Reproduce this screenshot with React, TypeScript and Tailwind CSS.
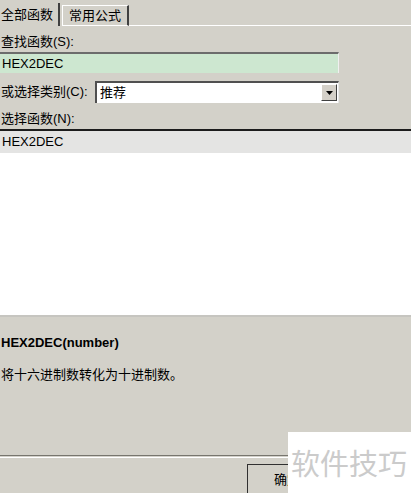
import { useState } from "react";

const ui = { fontFamily: '"Liberation Sans", "Noto Sans CJK SC", sans-serif' };

export default function App() {
    const [query, setQuery] = useState("HEX2DEC")
    const [tab, setTab] = useState(0)

    return (
        <div style={ui} className="relative w-[411px] h-[493px] overflow-hidden bg-[#d3d1c9] text-[13px] text-black">
            {/* tabs */}
            <div className="flex items-end h-[26px]">
                <div onClick={() => setTab(0)} className={`h-[23px] w-[60px] flex items-center pl-[1px] border-r-2 border-[#404040] ${tab === 0 ? "" : ""}`}>全部函数</div>
                <div onClick={() => setTab(1)} className="ml-[2px] h-[21px] w-[67px] flex items-center justify-center border-l border-t border-white border-r-2 border-r-[#404040] border-b border-b-white">常用公式</div>
                <div className="flex-1 h-px bg-white"></div>
            </div>

            <div className="pt-[8px] pl-[1px] leading-[15px]">查找函数(S):</div>
            <input
                value={query}
                onChange={(e) => setQuery(e.target.value)}
                style={ui}
                className="mt-[3px] block w-[339px] h-[21px] bg-[#cde7d0] border-t-2 border-[#6c6c6c] border-r border-r-[#f0f0f0] px-[2px] text-[13px] outline-none"
            />

            <div className="mt-[8px] flex items-center h-[22px]">
                <div className="w-[95px] pl-[1px]">或选择类别(C):</div>
                <div className="w-[244px] h-[22px] flex bg-white border-t-2 border-l-2 border-[#505050] border-r border-r-[#e8e8e8]">
                    <div className="flex-1 pl-[3px] leading-[19px]">推荐</div>
                    <div className="w-[16px] h-[17px] mt-[1px] mr-[1px] bg-[#d4d0c8] border border-t-white border-l-white border-r-[#404040] border-b-[#404040] flex items-center justify-center">
                        <svg width="7" height="4" viewBox="0 0 7 4"><path d="M0 0h7L3.5 4z" fill="#000" /></svg>
                    </div>
                </div>
            </div>

            <div className="mt-[8px] pl-[1px] leading-[16px]">选择函数(N):</div>

            <div className="mt-[2px] border-t-2 border-[#1c1c1c] border-b-2 border-b-[#c6c5c0] bg-white h-[188px]">
                <div className="h-[22px] bg-[#e4e4e3] flex items-center pl-[2px]">HEX2DEC</div>
            </div>

            <div className="pt-[18px] pl-[1px] font-bold leading-[16px]">HEX2DEC(number)</div>
            <div className="mt-[16px] pl-[1px] leading-[16px]">将十六进制数转化为十进制数。</div>

            <div className="mt-[72px] h-px bg-[#77756e]"></div>
            <div className="mt-[1px] h-px bg-white"></div>

            <div className="flex justify-end mt-[6px]">
                <div className="w-[164px] h-[30px] border-t border-l border-[#303030] flex items-center pl-[26px]">
                    <span className="w-[15px] overflow-hidden whitespace-nowrap">确定</span>
                </div>
            </div>

            {/* watermark */}
            <div className="absolute left-[288px] top-[432px] w-[123px] h-[61px] bg-white flex items-center pl-[3px]">
                <span style={{ fontFamily: '"Noto Sans CJK SC", sans-serif' }} className="text-[29px] text-[#cbcbcb] leading-none">软件技巧</span>
            </div>
        </div>
    );
}
